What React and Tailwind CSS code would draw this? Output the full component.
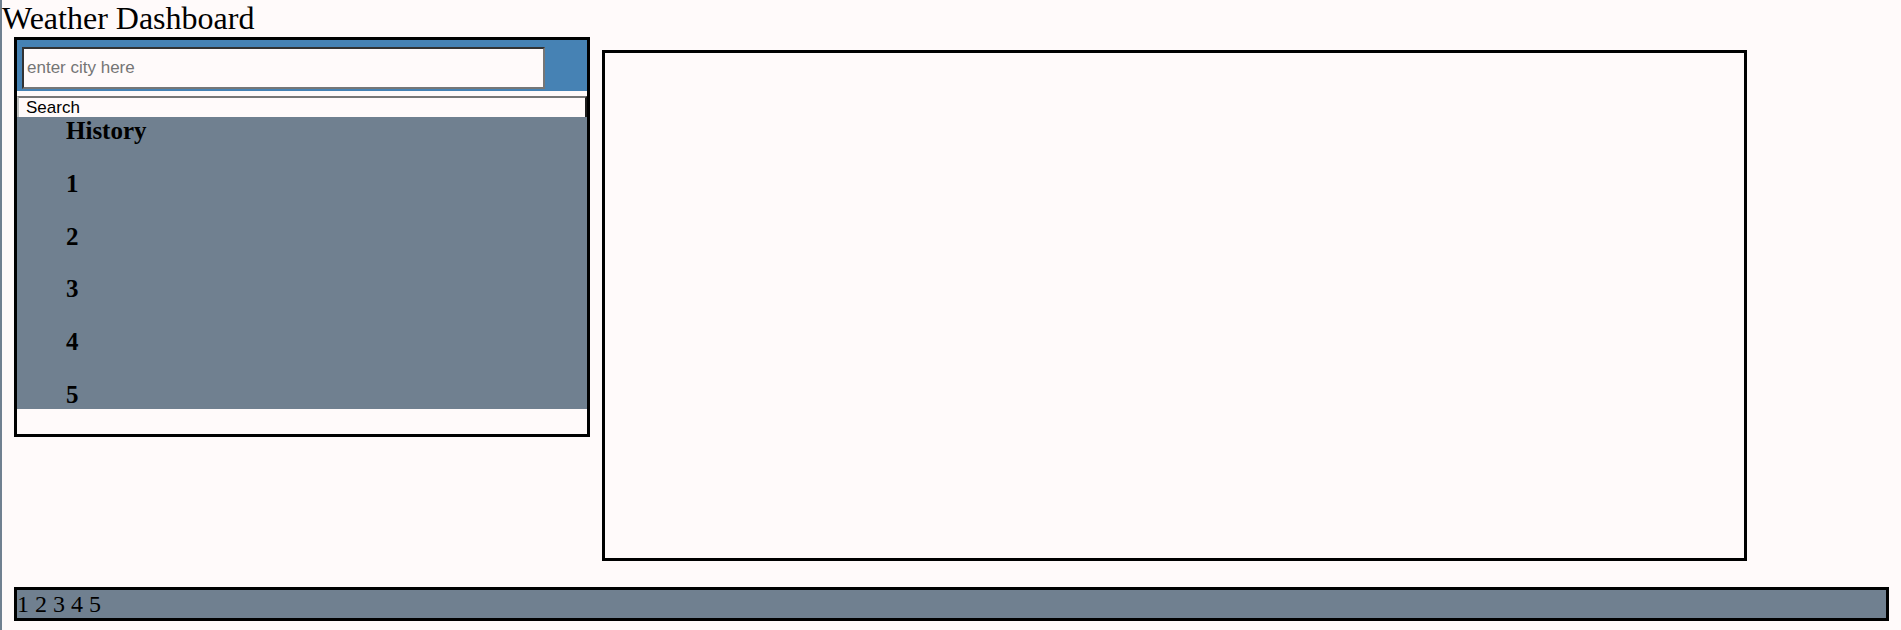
const HISTORY = ["1", "2", "3", "4", "5"];

const App = () => (
    <div className="min-h-screen bg-[#fffafa] border-l-2 border-[#708090] font-['Liberation_Serif',serif] text-black">
        <div className="text-[32px] leading-[37px] m-0">Weather Dashboard</div>

        <div className="flex items-start">
            {/* left panel: search + history */}
            <div className="ml-[12px] w-[576px] h-[400px] border-[3px] border-black flex flex-col">
                <div className="bg-[#4682b4] pt-[7px] pb-[2px] pl-[5px]">
                    <input
                        type="text"
                        placeholder="enter city here"
                        className="block w-[523px] h-[42px] bg-[#fffafa] border-2 border-t-[#333333] border-l-[#333333] border-r-[#767676] border-b-[#767676] pl-[3px] pr-[2px] font-['Liberation_Sans',sans-serif] text-[17px] placeholder:text-[#757575] outline-none"
                    />
                </div>
                <button className="mt-[5px] h-[21px] w-full text-left bg-[#fffafa] border-t-2 border-l-2 border-r-2 border-t-[#767676] border-l-[#bdbdbd] border-r-[#1c1c1c] pl-[7px] pr-[6px] font-['Liberation_Sans',sans-serif] text-[17px] leading-[19px]">
                    Search
                </button>
                <div className="bg-[#708090] pl-[49px] flex flex-col gap-[24.8px]">
                    <div className="text-[25px] font-bold leading-[28px]">History</div>
                    {HISTORY.map((h) => (
                        <div key={h} className="text-[25px] font-bold leading-[28px]">
                            {h}
                        </div>
                    ))}
                </div>
            </div>

            {/* right panel: current weather */}
            <div className="ml-[12px] mt-[13px] w-[1145px] h-[511px] border-[3px] border-black" />
        </div>

        {/* forecast strip */}
        <div className="mt-[26px] mx-[12px] h-[34px] border-[3px] border-black bg-[#708090] text-[24px] leading-[28px]">
            1 2 3 4 5
        </div>
    </div>
);

export default App;
